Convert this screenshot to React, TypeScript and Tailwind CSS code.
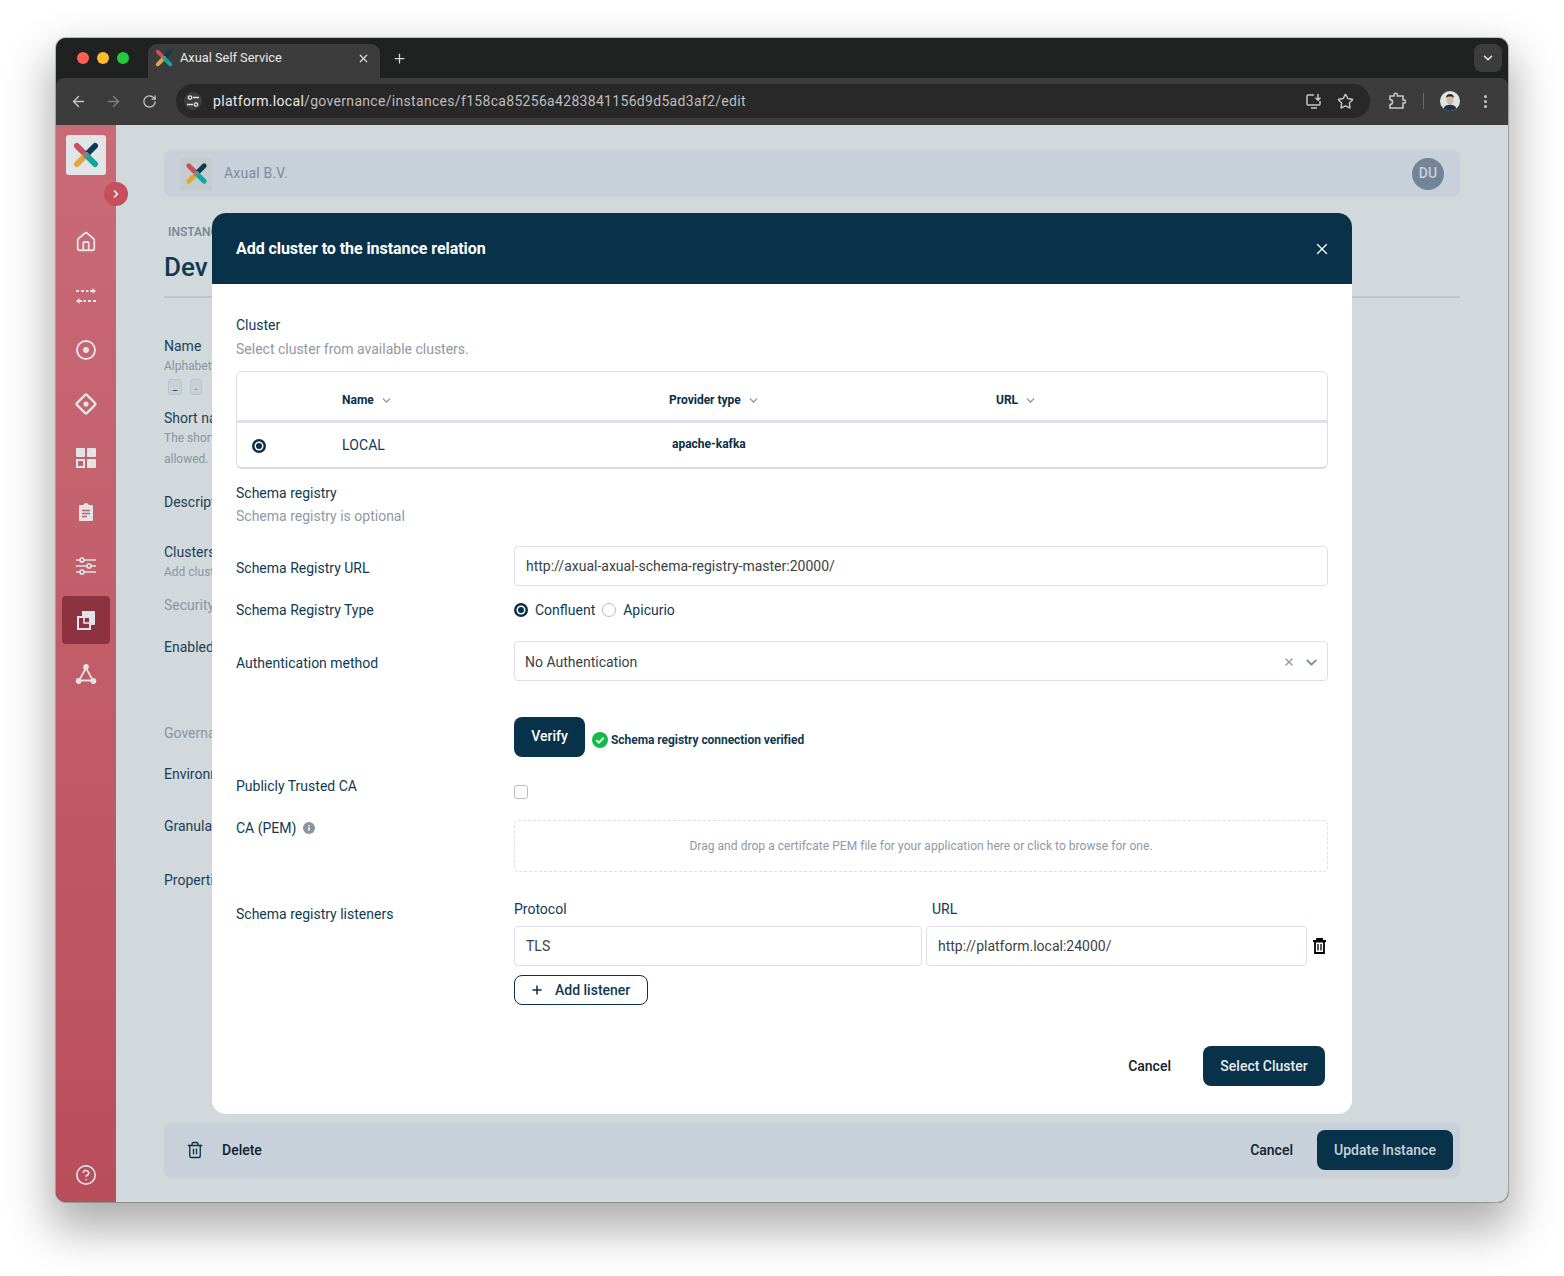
import React from "react";
import { House, Star, Plus, X, ChevronDown, ChevronRight, ArrowLeft, ArrowRight, RotateCw, EllipsisVertical, CircleHelp, Trash2 } from "lucide-react";

const AxualLogo = ({ size = 28 }: { size?: number }) => (
  <svg width={size} height={size} viewBox="0 0 28 28" fill="none" strokeWidth="5" strokeLinecap="round">
    <path d="M6 6 L14 14" stroke="#c9505f" />
    <path d="M22 6 L14 14" stroke="#0b3a52" />
    <path d="M6 22 L14 14" stroke="#e0a83c" />
    <path d="M22 22 L14 14" stroke="#12a59c" />
    <circle cx="14" cy="14" r="2.6" fill="#7d8587" />
  </svg>
);

const SideSlot = ({ children, active }: { children: React.ReactNode; active?: boolean }) => (
  <div className="h-[54px] w-full flex items-center justify-center shrink-0">
    <div className={`w-12 h-12 rounded flex items-center justify-center ${active ? "bg-[#8c3240]" : ""}`}>{children}</div>
  </div>
);

const ic = "#dfe4e7";

const Sidebar = () => (
  <aside className="w-[60px] shrink-0 flex flex-col items-center bg-gradient-to-b from-[#c96b77] to-[#b94e5b]">
    <div className="mt-2.5 w-10 h-10 rounded-[3px] bg-[#e1e5e8] flex items-center justify-center">
      <AxualLogo size={32} />
    </div>
    <div className="mt-10 w-full flex flex-col items-center">
      <SideSlot><House size={22} color={ic} strokeWidth={2} /></SideSlot>
      <SideSlot>
        <svg width="22" height="22" viewBox="0 0 22 22" fill="none" stroke={ic} strokeWidth="1.8">
          <path d="M1 6h3M6 6h3M11 6h2.500M15 6h4" />
          <path d="M17.500 3l3.500 3-3.500 3z" fill={ic} stroke="none" />
          <path d="M3 16h4M8.500 16h2.500M13 16h3M18 16h3" />
          <path d="M4.500 13l-3.500 3 3.500 3z" fill={ic} stroke="none" />
        </svg>
      </SideSlot>
      <SideSlot>
        <svg width="22" height="22" viewBox="0 0 22 22" fill="none">
          <circle cx="11" cy="11" r="9" stroke={ic} strokeWidth="2" />
          <circle cx="11" cy="11" r="3" fill={ic} />
        </svg>
      </SideSlot>
      <SideSlot>
        <svg width="22" height="22" viewBox="0 0 22 22" fill="none">
          <rect x="4" y="4" width="14" height="14" rx="1.5" transform="rotate(45 11 11)" stroke={ic} strokeWidth="2.4" />
          <circle cx="11" cy="11" r="2.6" fill={ic} />
        </svg>
      </SideSlot>
      <SideSlot>
        <svg width="22" height="22" viewBox="0 0 22 22" fill={ic}>
          <rect x="1" y="1" width="9" height="9" rx="1" />
          <rect x="12" y="1" width="9" height="9" rx="1" />
          <rect x="2" y="13" width="7" height="7" fill="none" stroke={ic} strokeWidth="2" />
          <rect x="12" y="12" width="9" height="9" rx="1" />
        </svg>
      </SideSlot>
      <SideSlot>
        <svg width="22" height="22" viewBox="0 0 22 22">
          <path d="M5 4h3.200a3 3 0 0 1 5.600 0H17a1 1 0 0 1 1 1v14a1 1 0 0 1-1 1H5a1 1 0 0 1-1-1V5a1 1 0 0 1 1-1z" fill={ic} />
          <path d="M7 9.500h8M7 12.500h8M7 15.500h5" stroke="#c25d69" strokeWidth="1.400" />
        </svg>
      </SideSlot>
      <SideSlot>
        <svg width="22" height="22" viewBox="0 0 22 22" fill="none" stroke={ic} strokeWidth="1.700">
          <path d="M1 5h4M9 5h12M1 11h11M16 11h5M1 17h4M9 17h12" />
          <circle cx="7" cy="5" r="2" />
          <circle cx="14" cy="11" r="2" />
          <circle cx="7" cy="17" r="2" />
        </svg>
      </SideSlot>
      <SideSlot active>
        <svg width="22" height="22" viewBox="0 0 22 22" fill="none">
          <path d="M7 2h12a1 1 0 0 1 1 1v12a1 1 0 0 1-1 1h-4V8a1 1 0 0 0-1-1H7z" fill={ic} />
          <rect x="3" y="8" width="12" height="12" stroke={ic} strokeWidth="2" />
          <rect x="9" y="8" width="6" height="6" stroke={ic} strokeWidth="1.600" />
        </svg>
      </SideSlot>
      <SideSlot>
        <svg width="22" height="22" viewBox="0 0 22 22" fill="none" stroke={ic} strokeWidth="1.800">
          <path d="M11 5L4 17.500h14z" />
          <circle cx="11" cy="4" r="2" fill={ic} />
          <circle cx="3.600" cy="18" r="2" fill={ic} />
          <circle cx="18.400" cy="18" r="2" fill={ic} />
        </svg>
      </SideSlot>
    </div>
    <div className="mt-auto h-[54px] flex items-center justify-center">
      <CircleHelp size={22} color={ic} strokeWidth={1.800} />
    </div>
  </aside>
);

const TabBar = () => (
  <div className="h-10 bg-[#202221] flex items-end pl-[21px] shrink-0">
    <div className="flex gap-2 self-center">
      <span className="w-3 h-3 rounded-full bg-[#ff5f57]" />
      <span className="w-3 h-3 rounded-full bg-[#febc2e]" />
      <span className="w-3 h-3 rounded-full bg-[#28c840]" />
    </div>
    <div className="ml-[19px] w-[232px] h-[34px] rounded-t-[9px] bg-[#3c3c3c] flex items-center pl-[5px] pr-[10px] pb-1.5 text-[#e8e8e8]">
      <AxualLogo size={22} />
      <span className="ml-[5px] text-[12.8px] font-['Roboto',sans-serif] leading-none">Axual Self Service</span>
      <X size={13} strokeWidth={2.200} className="ml-auto" color="#d8d8d8" />
    </div>
    <div className="ml-[12px] self-center flex items-center">
      <Plus size={15} strokeWidth={2} color="#d8d8d8" />
    </div>
    <div className="ml-auto mr-[6px] mb-[6px] w-7 h-7 rounded-lg bg-[#3c3c3c] flex items-center justify-center">
      <ChevronDown size={14} strokeWidth={2.600} color="#e8e8e8" />
    </div>
  </div>
);

const ToolBar = () => (
  <div className="h-[47px] bg-[#3c3c3c] flex items-center pl-[14px] pr-[13px] pb-px shrink-0 rounded-t-lg">
    <ArrowLeft size={17} color="#c4c7c5" strokeWidth={2} />
    <ArrowRight size={17} color="#7f7f7f" strokeWidth={2} className="ml-[18px]" />
    <RotateCw size={15} color="#c4c7c5" strokeWidth={2} className="ml-[20px]" />
    <div className="ml-[19px] w-[1194px] h-[34px] rounded-full bg-[#282828] flex items-center pl-[8px] pr-[16px]">
      <div className="w-[18px] h-[18px] rounded-full bg-[#3f3f3f] flex items-center justify-center">
        <svg width="14" height="14" viewBox="0 0 14 14" fill="none" stroke="#e3e3e3" strokeWidth="1.300">
          <circle cx="4" cy="3.500" r="1.700" />
          <path d="M7 3.500h6M1 10.500h6" />
          <circle cx="10" cy="10.500" r="1.700" />
        </svg>
      </div>
      <div className="ml-[11px] text-[14px] font-['Roboto',sans-serif] leading-none tracking-[0.31px]">
        <span className="text-[#e8e8e8]">platform.local</span>
        <span className="text-[#bdbdbd]">/governance/instances/f158ca85256a4283841156d9d5ad3af2/edit</span>
      </div>
      <svg className="ml-auto" width="18" height="18" viewBox="0 0 18 18" fill="none" stroke="#c4c7c5" strokeWidth="1.500">
        <path d="M9 3H3a1 1 0 0 0-1 1v8a1 1 0 0 0 1 1h11a1 1 0 0 0 1-1v-3M6 16h6M13 2v6M10.500 5.800L13 8.300l2.500-2.500" />
      </svg>
      <Star size={17} color="#c4c7c5" strokeWidth={2} className="ml-[14px]" />
    </div>
    <svg className="ml-[18px]" width="18" height="18" viewBox="0 0 18 18" fill="none" stroke="#c4c7c5" strokeWidth="1.600">
      <path d="M2 4h4V3a1.700 1.700 0 0 1 3.400 0v1H15v4h1.200a1.500 1.500 0 0 1 0 3H15v5H2v-3.500a2 2 0 0 0 0-5z" />
    </svg>
    <div className="ml-[17px] w-px h-4 bg-[#6b6b6b]" />
    <svg className="ml-[16px]" width="20" height="20" viewBox="0 0 20 20">
      <circle cx="10" cy="10" r="10" fill="#dde6e6" />
      <ellipse cx="10" cy="9" rx="3.600" ry="4.600" fill="#d9b59c" />
      <path d="M6 7c0-3 2-4 4-4s4 1 4 4c-1-1.400-2-1.600-4-1.600S7 5.600 6 7z" fill="#2b2420" />
      <path d="M3.500 17.500c1-3 3.500-3.800 6.500-3.800s5.500.8 6.500 3.800A10 10 0 0 1 3.500 17.500z" fill="#1c3350" />
    </svg>
    <EllipsisVertical size={17} color="#c4c7c5" strokeWidth={2.400} className="ml-[17px]" />
  </div>
);

const bgLabel = "text-[14px] leading-5 text-[#1d3f55] whitespace-nowrap";
const bgHint = "text-[12px] leading-5 text-[#8a96a2] whitespace-nowrap";

const Background = () => (
  <main className="flex-1 min-w-0 bg-[#d1d9dd] px-12 pt-[25px] pb-6 flex flex-col font-['Roboto',sans-serif]">
    <div className="h-[47px] rounded-lg bg-[#c8d0d9] flex items-center pl-4 pr-4 shrink-0">
      <div className="w-8 h-8 rounded-[3px] bg-[#c5cccf] flex items-center justify-center">
        <AxualLogo size={27} />
      </div>
      <span className="ml-3 text-[14px] tracking-[0.2px] text-[#7c8b99]">Axual B.V.</span>
      <div className="ml-auto w-8 h-8 rounded-full bg-[#738496] flex items-center justify-center text-[14px] font-medium text-[#c9d1d9]">DU</div>
    </div>
    <div className="mt-[25px] ml-1 text-[12px] leading-5 text-[#748391] font-medium">INSTANCE</div>
    <div className="mt-[9px] h-[32px] whitespace-nowrap text-[26px] leading-8 font-medium text-[#0f3a52]">Dev</div>
    <div className="mt-[13px] h-0.5 bg-[#b9c4d6]" />
    <div className={`mt-[38px] ${bgLabel}`}>Name</div>
    <div className={bgHint}>Alphabetic</div>
    <div className="mt-[3px] ml-1 flex gap-2">
      <span className="w-[14px] h-[16px] rounded-[3px] border border-[#b8c3d0] bg-[#c8d0d9] text-[10px] leading-[14px] text-center text-[#1d3f55]">_</span>
      <span className="w-3 h-[16px] rounded-[3px] border border-[#b8c3d0] bg-[#c8d0d9] text-[10px] leading-[14px] text-center text-[#1d3f55]">.</span>
    </div>
    <div className={`mt-[13px] ${bgLabel}`}>Short name</div>
    <div className={bgHint}>The short</div>
    <div className={`mt-[1px] ${bgHint}`}>allowed.</div>
    <div className={`mt-[23px] ${bgLabel}`}>Description</div>
    <div className={`mt-[30px] ${bgLabel}`}>Clusters</div>
    <div className={bgHint}>Add clusters</div>
    <div className="mt-[13px] text-[14px] leading-5 text-[#8a96a2]">Security</div>
    <div className={`mt-[22px] ${bgLabel}`}>Enabled</div>
    <div className="mt-[66px] text-[14px] leading-5 text-[#8a96a2]">Governance</div>
    <div className={`mt-[21px] ${bgLabel}`}>Environment</div>
    <div className={`mt-[32px] ${bgLabel}`}>Granular</div>
    <div className={`mt-[34px] ${bgLabel}`}>Properties</div>
    <div className="mt-auto h-14 rounded-lg bg-[#c8d0d9] flex items-center pl-[22px] pr-[7px] shrink-0">
      <Trash2 size={18} color="#0a3249" strokeWidth={1.800} />
      <span className="ml-[18px] text-[14px] font-medium text-[#10202c]">Delete</span>
      <span className="ml-auto text-[14px] font-medium text-[#10202c]">Cancel</span>
      <div className="ml-6 w-[136px] h-10 rounded-lg bg-[#08324a] flex items-center justify-center text-[14px] font-medium text-[#c9d1d9]">Update Instance</div>
    </div>
  </main>
);

const label = "text-[14px] leading-5 text-[#0f3a52]";
const hint = "text-[14px] leading-5 text-[#8f98a3]";
const inputBox = "h-10 rounded border border-[#e0deee] bg-white flex items-center text-[14px] text-[#3b3f45]";

const Row = ({ className = "", children }: { className?: string; children: React.ReactNode }) => (
  <div className={`grid grid-cols-[278px_1fr] ${className}`}>{children}</div>
);

const HeadCell = ({ children }: { children: React.ReactNode }) => (
  <div className="flex items-center gap-[6px] text-[12px] font-bold text-[#0a3047]">
    {children}
    <ChevronDown size={13} color="#7c8a97" strokeWidth={2} />
  </div>
);

const Radio = ({ on }: { on?: boolean }) =>
  on ? (
    <svg className="shrink-0 block" width="14" height="14" viewBox="0 0 14 14">
      <circle cx="7" cy="7" r="7" fill="#0a3047" />
      <circle cx="7" cy="7" r="4.500" fill="#ffffff" />
      <circle cx="7" cy="7" r="3" fill="#0a3047" />
    </svg>
  ) : (
    <span className="block w-[14px] h-[14px] rounded-full border border-[#b9bdc2] bg-white shrink-0" />
  );

const Modal = () => (
  <div className="absolute left-[156px] top-[88px] w-[1140px] rounded-[14px] bg-white overflow-hidden font-['Roboto',sans-serif]">
    <div className="h-[71px] bg-[#08324a] flex items-center justify-between pl-6 pr-[21px]">
      <span className="text-[16px] font-bold tracking-[-0.06px] text-white">Add cluster to the instance relation</span>
      <X size={18} color="#ffffff" strokeWidth={1.800} />
    </div>
    <div className="px-6 pt-[31px] pb-7">
      <div className={label}>Cluster</div>
      <div className={`mt-1 ${hint}`}>Select cluster from available clusters.</div>
      <div className="mt-3 h-[98px] rounded-md border border-[#e0deee] border-b-2 border-b-[#d8d8e6] flex flex-col">
        <div className="h-12 pt-2 grid grid-cols-[105px_327px_327px_1fr] items-center">
          <div />
          <HeadCell>Name</HeadCell>
          <HeadCell>Provider type</HeadCell>
          <HeadCell>URL</HeadCell>
        </div>
        <div className="h-[3px] bg-[#dfe0ec]" />
        <div className="flex-1 grid grid-cols-[105px_327px_327px_1fr] items-center">
          <div className="pl-[15px] mt-px"><Radio on /></div>
          <div className="text-[14px] text-[#0f3a52] tracking-[0.1px]">LOCAL</div>
          <div className="pl-[3px] -mt-0.5 text-[12px] font-bold text-[#0a3047]">apache-kafka</div>
          <div />
        </div>
      </div>
      <div className={`mt-[14px] ${label}`}>Schema registry</div>
      <div className={`mt-[3px] ${hint}`}>Schema registry is optional</div>

      <Row className="mt-5">
        <div className={`mt-3 ${label}`}>Schema Registry URL</div>
        <div className={`${inputBox} pl-[11px]`}>http://axual-axual-schema-registry-master:20000/</div>
      </Row>
      <Row className="mt-[14px] items-center h-5">
        <div className={label}>Schema Registry Type</div>
        <div className={`flex items-center ${label}`}>
          <Radio on />
          <span className="ml-[7px]">Confluent</span>
          <span className="ml-[7px] flex"><Radio /></span>
          <span className="ml-[7px]">Apicurio</span>
        </div>
      </Row>
      <Row className="mt-[21px]">
        <div className={`mt-3 ${label}`}>Authentication method</div>
        <div className={`${inputBox} pl-[10px] pr-[10px] pt-0.5`}>
          No Authentication
          <X size={12} color="#8794a0" strokeWidth={2.600} className="ml-auto" />
          <ChevronDown size={17} color="#7c8a97" strokeWidth={2.600} className="ml-[8px] -mr-[3px]" />
        </div>
      </Row>
      <Row className="mt-9">
        <div />
        <div className="flex items-center">
          <div className="w-[71px] h-10 rounded-lg bg-[#08324a] flex items-center justify-center pb-0.5 text-[14px] font-medium text-white">Verify</div>
          <div className="ml-[7px] mt-1.5 flex items-center gap-[3px]">
            <svg width="16" height="16" viewBox="0 0 16 16">
              <circle cx="8" cy="8" r="8" fill="#12bb4a" />
              <path d="M4.400 8.200l2.500 2.400 4.700-4.800" fill="none" stroke="#fff" strokeWidth="2" />
            </svg>
            <span className="text-[12px] font-bold tracking-[-0.05px] text-[#0f3a52]">Schema registry connection verified</span>
          </div>
        </div>
      </Row>
      <Row className="mt-[19px] h-6">
        <div className={label}>Publicly Trusted CA</div>
        <div className="pt-[9px]">
          <div className="w-[14px] h-[14px] rounded-[3px] border border-[#b9bdc2] bg-white" />
        </div>
      </Row>
      <Row className="mt-5">
        <div className={`-mt-0.5 flex items-start ${label}`}>
          CA (PEM)
          <svg className="ml-[7px] mt-1" width="12" height="12" viewBox="0 0 12 12">
            <circle cx="6" cy="6" r="6" fill="#8a95a1" />
            <path d="M6 5.200v3.600M6 3v1.300" stroke="#fff" strokeWidth="1.500" />
          </svg>
        </div>
        <div className="h-[52px] rounded border border-dashed border-[#dedcec] flex items-center justify-center text-[12px] tracking-[0.045px] text-[#8f98a3]">
          Drag and drop a certifcate PEM file for your application here or click to browse for one.
        </div>
      </Row>
      <Row className="mt-[27px]">
        <div className={`mt-[5px] ${label}`}>Schema registry listeners</div>
        <div>
          <div className="grid grid-cols-[418px_1fr]">
            <div className={label}>Protocol</div>
            <div className={label}>URL</div>
          </div>
          <div className="mt-[7px] flex items-center">
            <div className={`${inputBox} w-[408px] pl-[11px]`}>TLS</div>
            <div className={`${inputBox} ml-1 w-[381px] pl-[11px]`}>http://platform.local:24000/</div>
            <svg className="ml-[6px]" width="13" height="16" viewBox="0 0 13 16" fill="none" stroke="#000000" strokeWidth="1.800">
              <path d="M0 3h13M4 3V1h5v2" />
              <path d="M2 3.500h9V15H2z" />
              <path d="M5 6v6.500M8 6v6.500" strokeWidth="1.300" />
            </svg>
          </div>
          <div className="mt-[9px] w-[134px] h-[30px] rounded-lg border border-[#0a3047] flex items-center pl-[15px] text-[14px] font-medium text-[#0f3a52]">
            <Plus size={14} strokeWidth={2.600} color="#0a3047" />
            <span className="ml-[11px]">Add listener</span>
          </div>
        </div>
      </Row>
      <div className="mt-[41px] pr-[3px] flex items-center justify-end">
        <span className="text-[14px] font-medium text-[#10202c]">Cancel</span>
        <div className="ml-8 w-[122px] h-10 rounded-lg bg-[#08324a] flex items-center justify-center text-[14px] font-medium text-[#e8ecef]">Select Cluster</div>
      </div>
    </div>
  </div>
);

export default function App() {
  return (
    <div className="w-[1564px] h-[1276px] bg-white pt-[38px] pl-[56px] overflow-hidden">
      <div className="w-[1452px] h-[1164px] rounded-[10px] overflow-hidden flex flex-col shadow-[0_0_0_1px_rgba(0,0,0,0.22),0_22px_45px_6px_rgba(0,0,0,0.32)] bg-[#202221]">
        <TabBar />
        <ToolBar />
        <div className="relative flex-1 min-h-0 flex">
          <Sidebar />
          <Background />
          <Modal />
          <div className="absolute left-[48px] top-[57px] w-6 h-6 rounded-full bg-[#c64f5e] flex items-center justify-center">
            <ChevronRight size={12} color="#eef1f2" strokeWidth={3.400} />
          </div>
        </div>
      </div>
    </div>
  );
}
